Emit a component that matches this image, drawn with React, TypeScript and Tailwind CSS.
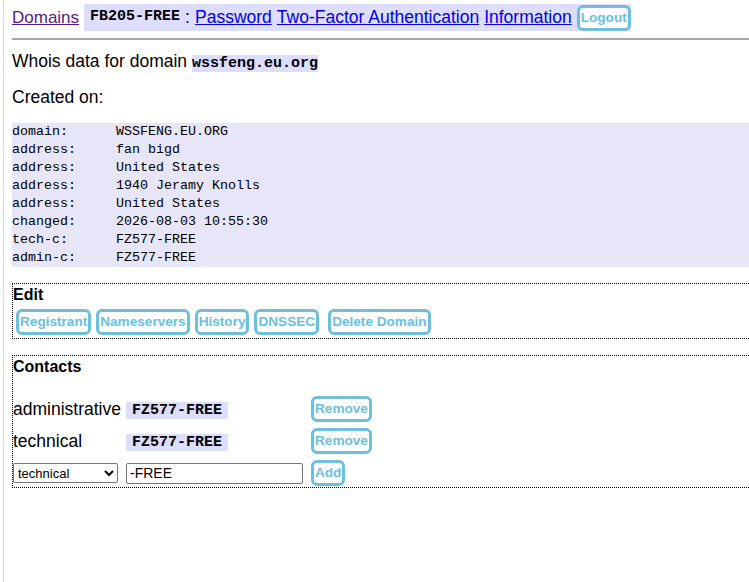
import React from "react";

const sans = "font-['Liberation_Sans',Arial,sans-serif]";
const mono = "font-['Liberation_Mono','Courier_New',monospace]";

const whois: [string, string][] = [
  ["domain:", "WSSFENG.EU.ORG"],
  ["address:", "fan bigd"],
  ["address:", "United States"],
  ["address:", "1940 Jeramy Knolls"],
  ["address:", "United States"],
  ["changed:", "2026-08-03 10:55:30"],
  ["tech-c:", "FZ577-FREE"],
  ["admin-c:", "FZ577-FREE"],
];

function Btn({ children, className = "" }: { children: React.ReactNode; className?: string }) {
  return (
    <button
      className={`h-[26px] rounded-[6px] border-[3px] border-[#6bbfe0] bg-white px-[1px] text-[13.6px] font-bold leading-[20px] text-[#6cc0e1] ${sans} ${className}`}
    >
      {children}
    </button>
  );
}

function Handle({ children, className = "" }: { children: React.ReactNode; className?: string }) {
  return (
    <span className={`bg-[#ddddff] text-[15px] font-bold text-black ${mono} ${className}`}>{children}</span>
  );
}

export default function App() {
  return (
    <div className="h-[582px] w-[749px] overflow-hidden bg-white">
      <div className={`ml-[3px] h-full w-[800px] border-l border-[#dcdcdc] pl-[8px] text-[17.5px] text-black ${sans}`}>
        {/* top navigation */}
        <div className="flex h-[35px] items-center">
          <a href="#" className="text-[17px] text-[#551a8b] underline">
            Domains
          </a>
          <div className="ml-[5px] flex h-[27px] items-center gap-[5px] bg-[#ddddff] pl-[6px]">
            <span className={`text-[15px] font-bold ${mono}`}>FB205-FREE</span>
            <span>:</span>
            <a href="#" className="text-[#0000ee] underline">Password</a>
            <a href="#" className="text-[#0000ee] underline">Two-Factor Authentication</a>
            <a href="#" className="text-[#0000ee] underline">Information</a>
            <Btn>Logout</Btn>
          </div>
        </div>
        <div className="mt-[3px] border-t-2 border-[#a8a8a8]" />

        <p className="mt-[11px] leading-[20px]">
          Whois data for domain <Handle>wssfeng.eu.org</Handle>
        </p>
        <p className="mt-[13px] leading-[20px]">Created on:</p>

        <div className={`mt-[16px] bg-[#e6e6f8] text-[13.33px] leading-[18px] ${mono}`}>
          {whois.map(([k, v], i) => (
            <div key={i} className="whitespace-pre">
              {k.padEnd(13, " ")}
              {v}
            </div>
          ))}
        </div>

        {/* edit actions */}
        <div className="mt-[16px] border border-dotted border-black pb-[3px]">
          <div className="text-[16px] font-bold leading-[22px]">Edit</div>
          <div className="mt-[3px] flex items-center gap-[5px] pl-[3px]">
            <Btn>Registrant</Btn>
            <Btn>Nameservers</Btn>
            <Btn>History</Btn>
            <Btn>DNSSEC</Btn>
            <Btn className="ml-[4px]">Delete Domain</Btn>
          </div>
        </div>

        {/* contacts */}
        <div className="mt-[16px] border border-dotted border-black pb-[1px]">
          <div className="text-[16px] font-bold leading-[22px]">Contacts</div>
          <div className="mt-[18px] grid auto-rows-[26px] grid-cols-[113px_185px_auto] items-center gap-y-[6px]">
            <span className="leading-[26px]">administrative</span>
            <span className="leading-[26px]">
              <Handle className="px-[6px]">FZ577-FREE</Handle>
            </span>
            <span className="flex">
              <Btn>Remove</Btn>
            </span>
            <span className="leading-[26px]">technical</span>
            <span className="leading-[26px]">
              <Handle className="px-[6px]">FZ577-FREE</Handle>
            </span>
            <span className="flex">
              <Btn>Remove</Btn>
            </span>
            <span className="flex">
              <select className="h-[20px] w-[105px] rounded-[2px] border border-[#767676] text-[13px] text-black">
                <option>technical</option>
                <option>administrative</option>
              </select>
            </span>
            <span className="flex">
              <input
                defaultValue="-FREE"
                className="h-[21px] w-[177px] rounded-[2px] border border-[#767676] px-[3px] text-[14px]"
              />
            </span>
            <span className="flex">
              <Btn>Add</Btn>
            </span>
          </div>
        </div>
      </div>
    </div>
  );
}
